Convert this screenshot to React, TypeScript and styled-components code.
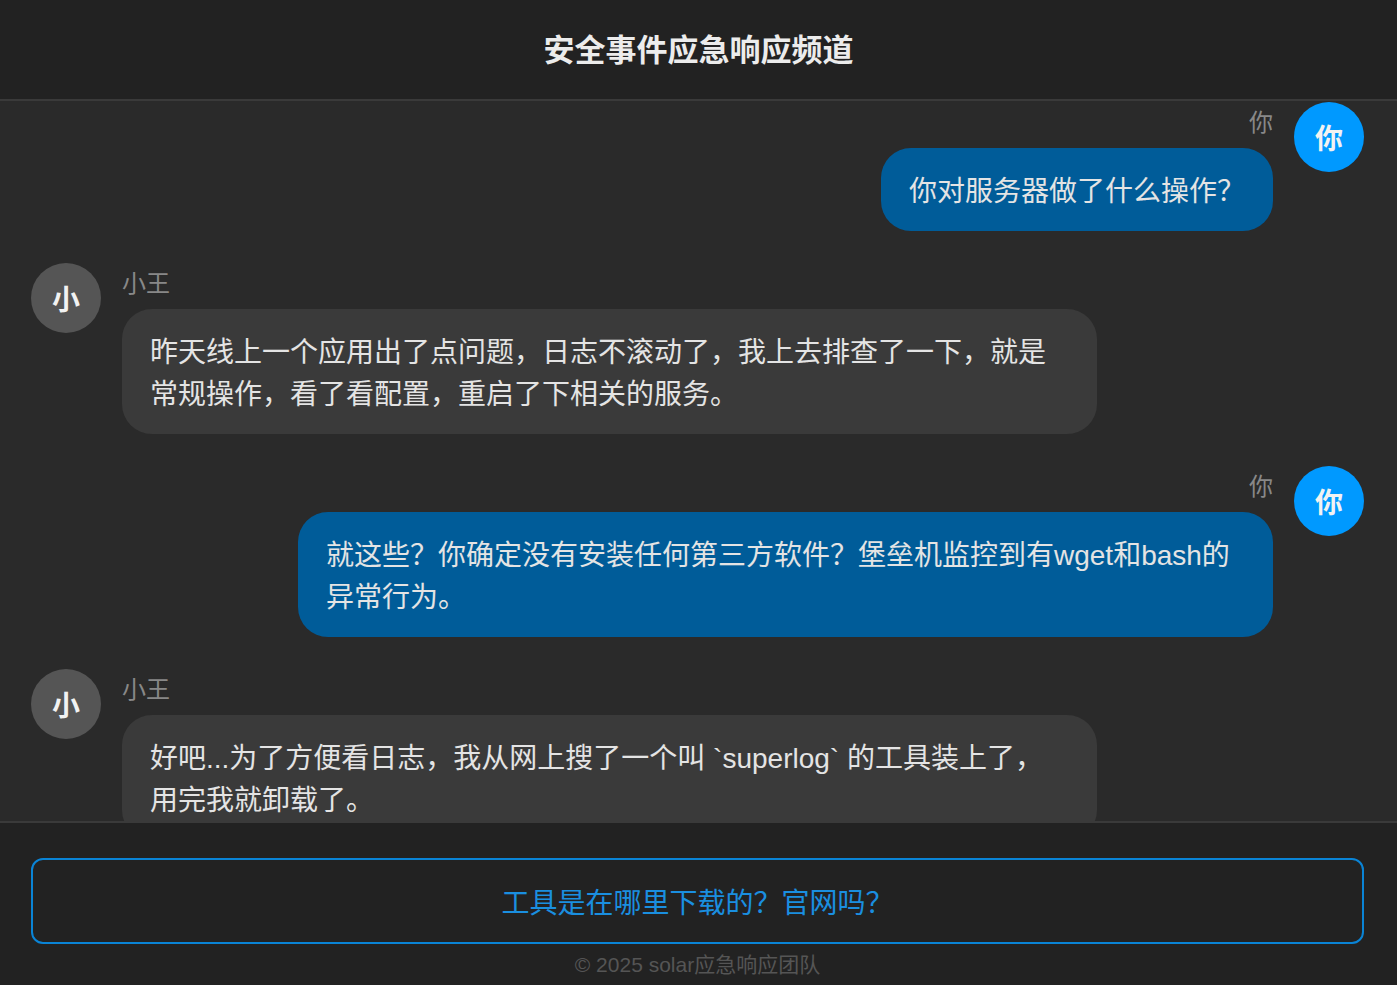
import React, { useLayoutEffect, useRef } from 'react';
import styled, { createGlobalStyle } from 'styled-components';

const GlobalStyle = createGlobalStyle`
  html, body, #root {
    margin: 0;
    padding: 0;
    height: 100%;
  }
  body {
    background: #222222;
    font-family: "Liberation Sans", "Noto Sans CJK SC", sans-serif;
    color: #e6e6e6;
  }
`;

type Msg = { from: 'me' | 'wang'; text: string };

// earlier part of the conversation, scrolled out of view
const earlier: Msg[] = [
    { from: 'me', text: '小王，你好，这里是安全事件应急响应频道。' },
    { from: 'wang', text: '你好，请问有什么事吗？' },
    { from: 'me', text: '我们监测到昨晚有一台生产服务器出现了异常外联流量，需要向你了解一下情况。' },
    { from: 'wang', text: '异常外联？不会吧，那台服务器一直挺正常的。' },
    { from: 'me', text: '根据堡垒机的登录记录，昨晚只有你的账号登录过这台服务器，对吗？' },
    { from: 'wang', text: '对，是我登录的，我昨天晚上在值班。' },
    { from: 'me', text: '你大概是什么时间登录的？登录之后待了多久？' },
    { from: 'wang', text: '大概九点多吧，待了半个小时左右就退出了。' },
    { from: 'me', text: '登录期间还有其他人使用你的账号吗？' },
    { from: 'wang', text: '没有，账号只有我自己在用。' },
    { from: 'me', text: '好的，请你如实配合调查。' },
    { from: 'wang', text: '明白，我一定配合。' },
];

const recent: Msg[] = [
    { from: 'me', text: '你对服务器做了什么操作？' },
    { from: 'wang', text: '昨天线上一个应用出了点问题，日志不滚动了，我上去排查了一下，就是常规操作，看了看配置，重启了下相关的服务。' },
    { from: 'me', text: '就这些？你确定没有安装任何第三方软件？堡垒机监控到有wget和bash的异常行为。' },
    { from: 'wang', text: '好吧...为了方便看日志，我从网上搜了一个叫 `superlog` 的工具装上了，用完我就卸载了。' },
];

const Page = styled.div`
    height: 100vh;
    display: flex;
    flex-direction: column;
`

const Header = styled.header`
    flex: 0 0 auto;
    height: 101px;
    box-sizing: border-box;
    padding-bottom: 4px;
    display: flex;
    align-items: center;
    justify-content: center;
    background: #222222;
    border-bottom: 2px solid #3a3a3a;
`

const Title = styled.h1`
    margin: 0;
    font-size: 31px;
    font-weight: 700;
    color: #ececec;
`

const MessageList = styled.div`
    position: relative;
    flex: 1 1 auto;
    overflow-y: auto;
    background: #2a2a2a;
    padding: 32px 33px 100px 31px;
    display: flex;
    flex-direction: column;
    gap: 32px;
    scrollbar-width: thin;
    scrollbar-color: #8a8a8a transparent;
`

const Row = styled.div<{ $mine: boolean }>`
    display: flex;
    flex-direction: ${p => (p.$mine ? 'row-reverse' : 'row')};
    align-items: flex-start;
    gap: 21px;
    flex: 0 0 auto;
`

const Avatar = styled.div<{ $mine: boolean }>`
    flex: 0 0 70px;
    width: 70px;
    height: 70px;
    border-radius: 50%;
    background: ${p => (p.$mine ? '#0099ff' : '#555555')};
    color: #f2f2f2;
    font-size: 28px;
    font-weight: 700;
    display: flex;
    align-items: center;
    justify-content: center;
`

const Body = styled.div<{ $mine: boolean }>`
    display: flex;
    flex-direction: column;
    align-items: ${p => (p.$mine ? 'flex-end' : 'flex-start')};
    min-width: 0;
`

const Name = styled.div`
    font-size: 24px;
    line-height: 36px;
    padding-top: 3px;
    color: #888888;
    margin-bottom: 7px;
`

const Bubble = styled.div<{ $mine: boolean }>`
    max-width: 975px;
    box-sizing: border-box;
    padding: 23px 28px 18px;
    border-radius: 30px;
    background: ${p => (p.$mine ? '#005c99' : '#3a3a3a')};
    color: #e4e4e4;
    font-size: 28px;
    line-height: 42px;
    white-space: pre-wrap;
    word-break: break-all;
`

const Footer = styled.footer`
    flex: 0 0 auto;
    background: #222222;
    border-top: 2px solid #3a3a3a;
    padding: 35px 33px 5px 31px;
    display: flex;
    flex-direction: column;
    align-items: stretch;
`

const OptionButton = styled.button`
    height: 86px;
    border: 2px solid #0a84d6;
    border-radius: 12px;
    background: transparent;
    color: #1a8fe0;
    font-family: inherit;
    font-size: 28px;
    cursor: pointer;
`

const Copyright = styled.div`
    margin-top: 6px;
    text-align: center;
    font-size: 21px;
    line-height: 30px;
    color: #555555;
`

const Message = React.forwardRef<HTMLDivElement, { msg: Msg }>(({ msg }, ref) => {
    const mine = msg.from === 'me';
    return (
        <Row ref={ref} $mine={mine}>
            <Avatar $mine={mine}>{mine ? '你' : '小'}</Avatar>
            <Body $mine={mine}>
                <Name>{mine ? '你' : '小王'}</Name>
                <Bubble $mine={mine}>{msg.text}</Bubble>
            </Body>
        </Row>
    );
});

export default function App() {
    const listRef = useRef<HTMLDivElement>(null);
    const anchorRef = useRef<HTMLDivElement>(null);

    useLayoutEffect(() => {
        const place = () => {
            if (listRef.current && anchorRef.current) {
                listRef.current.scrollTop = anchorRef.current.offsetTop - 1;
            }
        };
        place();
        requestAnimationFrame(place);
        document.fonts?.ready.then(place);
    }, []);

    return (
        <>
            <GlobalStyle />
            <Page>
                <Header>
                    <Title>安全事件应急响应频道</Title>
                </Header>
                <MessageList ref={listRef}>
                    {earlier.map((m, i) => (
                        <Message key={'e' + i} msg={m} />
                    ))}
                    {recent.map((m, i) => (
                        <Message key={'r' + i} msg={m} ref={i === 0 ? anchorRef : undefined} />
                    ))}
                </MessageList>
                <Footer>
                    <OptionButton>工具是在哪里下载的？官网吗？</OptionButton>
                    <Copyright>© 2025 solar应急响应团队</Copyright>
                </Footer>
            </Page>
        </>
    );
}
